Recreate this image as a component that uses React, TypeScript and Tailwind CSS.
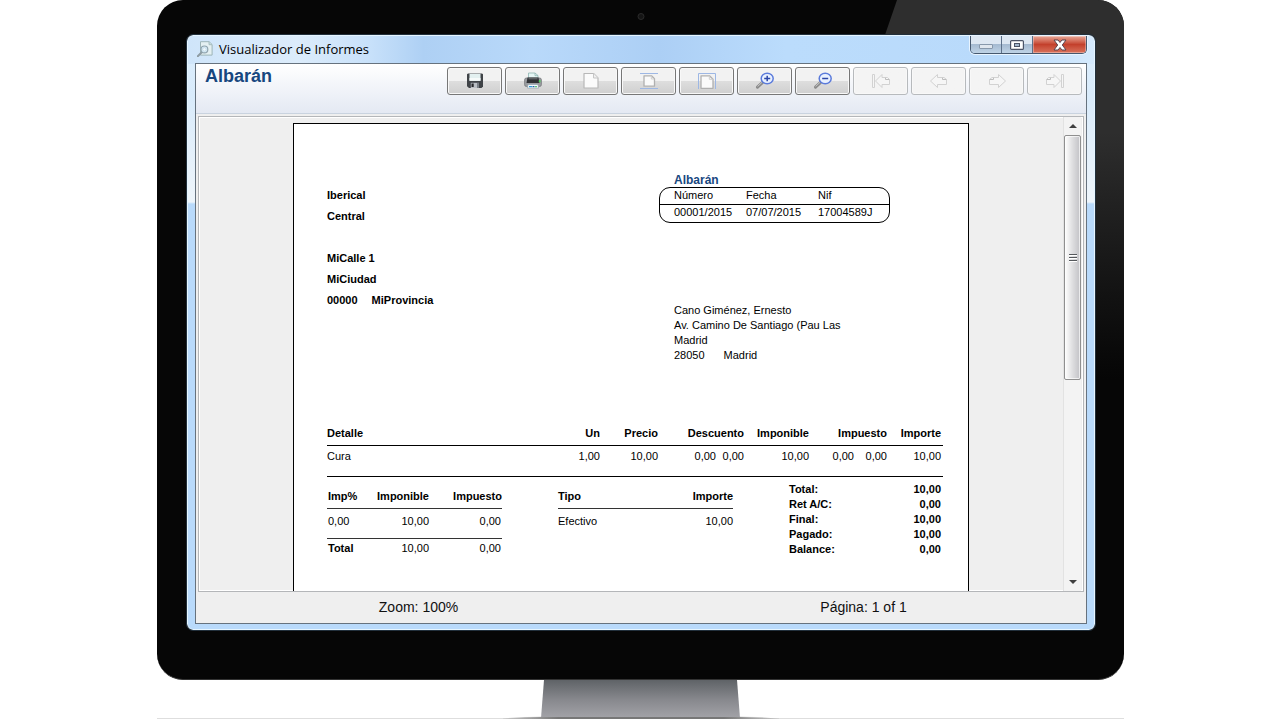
import type { ReactNode } from "react";

function SearchPageIcon() {
  return (
    <svg viewBox="0 0 16 16" className="size-4 shrink-0" aria-hidden="true">
      <path d="M3.5.7h8.6l3 2.8v10.6H3.5z" fill="#e4f0f2" stroke="#9db4b8" />
      <path d="M12 .7v3h3" fill="#c5dcdc" stroke="#9db4b8" strokeWidth=".8" />
      <path d="M.8 15.2 5 11" stroke="#8e9ca3" strokeWidth="2" strokeLinecap="round" />
      <circle cx="7.4" cy="8.4" r="3.4" fill="#d9eefa" stroke="#8fa3ad" strokeWidth="1.2" />
      <circle cx="7.4" cy="8.4" r="1.8" fill="#eef8fd" stroke="#b5cfdb" strokeWidth=".6" />
    </svg>
  );
}

function SaveIcon() {
  return (
    <svg viewBox="0 0 16 16" className="size-4" aria-hidden="true">
      <path d="M0 1.2 1 .5h14l1 .7v12.3L14.5 15H2L0 13.200z" fill="#3f4347" />
      <path d="M2.500.8h11v7h-11z" fill="#e3f0f0" />
      <path d="M2.500 5h11v2.800h-11z" fill="#f6fafa" />
      <path d="M3.800 9.800h8.200V15H3.800z" fill="#b9bec4" />
      <path d="M4.500 10.500h2.200V14H4.500z" fill="#27292c" />
      <path d="M10 10h2v5h-2z" fill="#787e85" />
    </svg>
  );
}

function PrintIcon() {
  return (
    <svg viewBox="0 0 18 18" className="size-[18px]" aria-hidden="true">
      <path d="M4.500 7V1h6.500l3 2.500V7z" fill="#e6f5f4" stroke="#8fb5b3" strokeWidth=".8" />
      <path d="M11 1v2.700h3" fill="none" stroke="#8fb5b3" strokeWidth=".8" />
      <rect x=".6" y="6" width="16.800" height="8.500" rx="1.800" fill="#9a9da1" stroke="#777a7e" strokeWidth=".8" />
      <path d="M3.500 5.500h11l1 5.500h-13z" fill="#303236" />
      <path d="M4.500 6.800h9" stroke="#85898d" strokeWidth=".8" />
      <rect x="14.800" y="8.200" width="1.700" height="2" fill="#4ed35c" />
      <path d="M4 12.500h10l.6 3.600H3.400z" fill="#f4fbff" stroke="#8d9da8" strokeWidth=".6" />
      <path d="M5 14h3v1.200H5z" fill="#2f9bd8" />
      <path d="M8.500 14h2v1.200h-2z" fill="#2766a3" />
      <path d="M11 14h2v1.200h-2z" fill="#61c877" />
    </svg>
  );
}

function ActualSizeIcon() {
  return (
    <svg viewBox="0 0 18 18" className="size-[18px]" aria-hidden="true">
      <path d="M2 1.500h9.500l4.500 4.500V16H2z" fill="#fbfbfb" stroke="#b8b8b8" strokeWidth="1.200" strokeLinejoin="round" />
      <path d="M11.500 1.500V6H16" fill="#f0f0f0" stroke="#c6c6c6" strokeLinejoin="round" />
    </svg>
  );
}

function FitPageIcon() {
  return (
    <svg viewBox="0 0 20 18" className="h-[18px] w-5" aria-hidden="true">
      <path d="M1 1.500h18M1 16.500h18" stroke="#9db7e4" />
      <path
        d="M5 3.800h7.500l3 3V14.200H5z"
        fill="#fafafa"
        stroke="#b0b0b0"
        strokeWidth="1.300"
        strokeLinejoin="round"
      />
      <path d="M12.300 4v3h3" fill="none" stroke="#cfcfcf" />
    </svg>
  );
}

function FitWidthIcon() {
  return (
    <svg viewBox="0 0 20 18" className="h-[18px] w-5" aria-hidden="true">
      <path d="M1.500 17V1.500h17V17" fill="none" stroke="#9db7e4" />
      <path
        d="M4 3.800h8.500l3.500 3.500v9H4z"
        fill="#fafafa"
        stroke="#b0b0b0"
        strokeWidth="1.300"
        strokeLinejoin="round"
      />
      <path d="M12.300 4v3.300h3.500" fill="none" stroke="#cfcfcf" />
    </svg>
  );
}

function ZoomIcon({ plus = false }: { plus?: boolean }) {
  return (
    <svg viewBox="0 0 20 18" className="h-[18px] w-5" aria-hidden="true">
      <path d="M2.500 15.200 7.600 10.300" stroke="#8a8a8a" strokeWidth="3" strokeLinecap="round" />
      <path d="M2.600 14.500 7 10.300" stroke="#c9c9c9" />
      <ellipse cx="12.200" cy="6.500" rx="6" ry="5.300" fill="#e9f1ff" stroke="#5b7bdb" strokeWidth="1.500" />
      <path d={plus ? "M9.200 6.500h6M12.200 3.700v5.600" : "M9.200 6.500h6"} stroke="#2b46a8" strokeWidth="1.500" />
    </svg>
  );
}

function ArrowIcon({ flip = false, bar = false }: { flip?: boolean; bar?: boolean }) {
  return (
    <svg viewBox="0 0 20 16" className="h-4 w-5" aria-hidden="true">
      <g
        transform={flip ? "translate(20 0) scale(-1 1)" : undefined}
        fill="#f6f6f6"
        stroke="#d2d2d2"
        strokeLinejoin="round"
      >
        {bar && <path d="M1.500 1.500h2v13h-2z" />}
        <path
          d={
            bar
              ? "M4.500 8 11 1.500V4.500h5.500l2 2v5H11v3z"
              : "M1.500 8 8.500 1.500v3h6.500l2.500 2v5h-9v3z"
          }
        />
        <path d={bar ? "M14.500 4.800v1.700h3.800" : "M13.500 4.800v1.700h3.800"} fill="none" stroke="#bdbdbd" />
      </g>
    </svg>
  );
}

interface Tool {
  label: string;
  icon: ReactNode;
  disabled?: boolean;
}

const tools: Tool[] = [
  { label: "Guardar", icon: <SaveIcon /> },
  { label: "Imprimir", icon: <PrintIcon /> },
  { label: "Tamaño real", icon: <ActualSizeIcon /> },
  { label: "Ajustar página", icon: <FitPageIcon /> },
  { label: "Ajustar ancho", icon: <FitWidthIcon /> },
  { label: "Acercar", icon: <ZoomIcon plus /> },
  { label: "Alejar", icon: <ZoomIcon /> },
  { label: "Primera página", icon: <ArrowIcon bar />, disabled: true },
  { label: "Página anterior", icon: <ArrowIcon />, disabled: true },
  { label: "Página siguiente", icon: <ArrowIcon flip />, disabled: true },
  { label: "Última página", icon: <ArrowIcon flip bar />, disabled: true },
];

function Toolbar() {
  return (
    <div role="toolbar" aria-label="Informe" className="flex gap-[3px] pt-[3px]">
      {tools.map((tool) => (
        <button
          key={tool.label}
          type="button"
          aria-label={tool.label}
          disabled={tool.disabled}
          className="flex h-7 w-[55px] items-center justify-center rounded-[3px] border border-[#777] bg-linear-to-b from-[#f2f2f2] from-50% via-[#dedede] via-50% to-[#cfcfcf] shadow-[inset_0_0_0_1px_#f8f8f8] disabled:border-[#b7babd] disabled:from-[#f4f4f4] disabled:via-[#f4f4f4] disabled:to-[#f4f4f4]"
        >
          {tool.icon}
        </button>
      ))}
    </div>
  );
}

function TitleBar() {
  return (
    <header className="flex h-[27px] items-start justify-between">
      <div className="flex items-center gap-1.5 pt-[3px] pl-0.5">
        <SearchPageIcon />
        <span className="font-['Open_Sans','Noto_Sans',sans-serif] text-[13px] leading-5 text-black">
          Visualizador de Informes
        </span>
      </div>
      <div className="flex h-[18px] overflow-hidden rounded-b-[5px] border border-t-0 border-[#46586e] shadow-[0_0_0_1px_#e8f4ff]">
        <button
          type="button"
          aria-label="Minimizar"
          className="flex w-[31px] items-end justify-center border-r border-[#5d7089] bg-linear-to-b from-[#dde7f2] from-45% via-[#a3b8cf] via-45% to-[#bfd3e6] pb-1"
        >
          <svg viewBox="0 0 14 5" className="h-[5px] w-3.5" aria-hidden="true">
            <rect x=".5" y=".5" width="13" height="4" rx=".5" fill="#dfe6ee" stroke="#8798ab" />
          </svg>
        </button>
        <button
          type="button"
          aria-label="Maximizar"
          className="flex w-[31px] items-center justify-center border-r border-[#5d7089] bg-linear-to-b from-[#dde7f2] from-45% via-[#a3b8cf] via-45% to-[#bfd3e6]"
        >
          <svg viewBox="0 0 14 10" className="h-2.5 w-3.5" aria-hidden="true">
            <rect x=".6" y=".6" width="12.800" height="8.800" rx="1" fill="#fff" stroke="#4c5568" strokeWidth="1.200" />
            <rect x="4.500" y="3.500" width="5" height="3" fill="#a3b8cf" stroke="#4c5568" />
          </svg>
        </button>
        <button
          type="button"
          aria-label="Cerrar"
          className="flex w-[53px] items-center justify-center bg-linear-to-b from-[#e8a798] from-0% via-[#c3402c] via-50% to-[#d9725c] shadow-[inset_0_0_0_1px_#ffffff55]"
        >
          <svg viewBox="0 0 14 12" className="h-3 w-3.5" aria-hidden="true">
            <path
              d="M1 1h4l2 2.500L9 1h4L9.300 6 13 11H9L7 8.500 5 11H1l3.700-5z"
              fill="#fff"
              stroke="#59444f"
              strokeLinejoin="round"
            />
          </svg>
        </button>
      </div>
    </header>
  );
}

function Scrollbar() {
  return (
    <div className="flex w-[18px] shrink-0 flex-col border-l border-[#e2e2e2] bg-[#f3f3f3]">
      <button type="button" aria-label="Subir" className="flex h-[18px] items-center justify-center">
        <svg viewBox="0 0 8 4" className="h-1 w-2" aria-hidden="true">
          <path d="M0 4 4 0l4 4z" fill="#404040" />
        </svg>
      </button>
      <div className="min-h-0 flex-1">
        <div className="flex h-[56%] items-center justify-center rounded-[2px] border border-[#8f8f8f] bg-linear-to-r from-[#f8f8f8] from-10% via-[#dedee0] via-50% to-[#c2c2c6] shadow-[inset_0_0_0_1px_#ffffffaa]">
          <svg viewBox="0 0 8 9" className="h-[9px] w-2" aria-hidden="true">
            <path d="M0 1.500h8M0 4.500h8M0 7.500h8" stroke="#55585c" />
            <path d="M0 2.500h8M0 5.500h8M0 8.500h8" stroke="#fff" />
          </svg>
        </div>
      </div>
      <button type="button" aria-label="Bajar" className="flex h-[18px] items-center justify-center">
        <svg viewBox="0 0 8 4" className="h-1 w-2" aria-hidden="true">
          <path d="M0 0h8L4 4z" fill="#404040" />
        </svg>
      </button>
    </div>
  );
}

const totals = [
  ["Total:", "10,00"],
  ["Ret A/C:", "0,00"],
  ["Final:", "10,00"],
  ["Pagado:", "10,00"],
  ["Balance:", "0,00"],
];

function DetailTable() {
  return (
    <table className="w-full table-fixed text-right whitespace-nowrap">
      <colgroup>
        <col />
        <col className="w-[60px]" />
        <col className="w-[58px]" />
        <col className="w-[58px]" />
        <col className="w-[28px]" />
        <col className="w-[65px]" />
        <col className="w-[45px]" />
        <col className="w-[33px]" />
        <col className="w-[56px]" />
      </colgroup>
      <thead>
        <tr className="h-[23px] border-b border-black">
          <th className="text-left">Detalle</th>
          <th>Un</th>
          <th>Precio</th>
          <th colSpan={2}>Descuento</th>
          <th>Imponible</th>
          <th colSpan={2}>Impuesto</th>
          <th className="pr-0.5">Importe</th>
        </tr>
      </thead>
      <tbody>
        <tr className="h-[31px] border-b border-black align-top">
          <td className="pt-[3px] text-left">Cura</td>
          <td className="pt-[3px]">1,00</td>
          <td className="pt-[3px]">10,00</td>
          <td className="pt-[3px]">0,00</td>
          <td className="pt-[3px]">0,00</td>
          <td className="pt-[3px]">10,00</td>
          <td className="pt-[3px]">0,00</td>
          <td className="pt-[3px]">0,00</td>
          <td className="pt-[3px] pr-0.5">10,00</td>
        </tr>
      </tbody>
    </table>
  );
}

function Report() {
  return (
    <article className="mx-auto w-[676px] max-w-full shrink-0 border border-black bg-white pt-[49px] pr-[25px] pb-20 pl-[33px] text-[11px] leading-[15px] text-black">
      <div className="flex justify-between">
        <address className="pt-3 leading-[21px] font-bold not-italic">
          <p>Iberical</p>
          <p>Central</p>
          <p>&nbsp;</p>
          <p>MiCalle 1</p>
          <p>MiCiudad</p>
          <p className="flex gap-3.5">
            <span>00000</span>
            <span>MiProvincia</span>
          </p>
        </address>
        <section className="mr-[53px] w-[231px]">
          <h2 className="pl-[15px] text-[12px] leading-[14px] font-bold text-[#17477f]">Albarán</h2>
          <div className="overflow-hidden rounded-[11px] border border-black">
            <table className="w-full table-fixed text-left">
              <colgroup>
                <col className="w-[86px]" />
                <col className="w-[72px]" />
                <col />
              </colgroup>
              <thead>
                <tr className="h-4 border-b border-black align-top leading-[14px]">
                  <th className="pl-3.5 font-normal">Número</th>
                  <th className="font-normal">Fecha</th>
                  <th className="font-normal">Nif</th>
                </tr>
              </thead>
              <tbody>
                <tr className="h-[18px] align-top leading-[14px]">
                  <td className="pl-3.5">00001/2015</td>
                  <td>07/07/2015</td>
                  <td>17004589J</td>
                </tr>
              </tbody>
            </table>
          </div>
          <address className="mt-20 pl-[15px] whitespace-nowrap not-italic">
            <p>Cano Giménez, Ernesto</p>
            <p>Av. Camino De Santiago (Pau Las</p>
            <p>Madrid</p>
            <p className="flex gap-[19px]">
              <span>28050</span>
              <span>Madrid</span>
            </p>
          </address>
        </section>
      </div>

      <div className="mt-[59px]">
        <DetailTable />
      </div>

      <div className="flex justify-between">
        <table className="mt-[9px] w-[175px] table-fixed self-start text-right">
          <thead>
            <tr className="h-[23px] border-b border-[#333]">
              <th className="w-[40px] pl-px text-left">Imp%</th>
              <th className="w-[62px]">Imponible</th>
              <th>Impuesto</th>
            </tr>
          </thead>
          <tbody>
            <tr className="h-[30px] border-b border-[#333] align-top">
              <td className="pt-[5px] pl-px text-left">0,00</td>
              <td className="pt-[5px]">10,00</td>
              <td className="pt-[5px] pr-px">0,00</td>
            </tr>
          </tbody>
          <tfoot>
            <tr className="h-5">
              <th className="pl-px text-left">Total</th>
              <td>10,00</td>
              <td className="pr-px">0,00</td>
            </tr>
          </tfoot>
        </table>
        <table className="mt-[9px] w-[175px] self-start text-right">
          <thead>
            <tr className="h-[23px] border-b border-[#333]">
              <th className="text-left">Tipo</th>
              <th>Importe</th>
            </tr>
          </thead>
          <tbody>
            <tr className="h-[30px] align-top">
              <td className="pt-[5px] text-left">Efectivo</td>
              <td className="pt-[5px]">10,00</td>
            </tr>
          </tbody>
        </table>
        <dl className="mt-[5px] mr-0.5 w-[152px] font-bold">
          {totals.map(([label, value]) => (
            <div key={label} className="flex justify-between">
              <dt>{label}</dt>
              <dd>{value}</dd>
            </div>
          ))}
        </dl>
      </div>
    </article>
  );
}

function ViewerWindow() {
  return (
    <section className="relative flex min-h-0 flex-1 flex-col rounded-[6px] border border-[#e6f5ff] bg-[linear-gradient(180deg,#dceefd_0,#d9ebfb_60px,#eef5fb_166px,#b9dafb_168px,#b9dafb_100%)] px-[7px] pb-[5px] outline outline-[#22303c]">
      <div className="absolute inset-x-0 top-0 h-7 rounded-t-[5px] bg-[linear-gradient(90deg,#cfe5fa_0,#dcecfb_12%,#c8e1fa_20%,#aed0f4_26%,#b9d9fa_38%,#accff5_52%,#bbdcfc_66%,#b9dafb_90%,#d5eafd_100%)]" />
      <div className="relative flex min-h-0 flex-1 flex-col">
        <TitleBar />
        <div className="flex min-h-0 flex-1 flex-col border border-[#66727e] bg-[#efefef]">
          <div className="flex h-[50px] shrink-0 justify-between border-b border-[#c9d3df] bg-linear-to-b from-white to-[#e4e9f3] pr-1 pl-[9px]">
            <h1 className="text-[18px] leading-6 font-bold text-[#17477f]">Albarán</h1>
            <Toolbar />
          </div>
          <div className="mx-0.5 mt-0.5 flex min-h-0 flex-1 border border-[#b4b6b9] pr-0.5 shadow-[inset_0_0_0_1px_#fff]">
            <div className="flex min-w-0 flex-1 flex-col overflow-hidden pt-1.5">
              <Report />
            </div>
            <Scrollbar />
          </div>
          <footer className="grid h-[31px] shrink-0 grid-cols-2 text-center text-[14px] leading-[30px] text-[#111]">
            <p>Zoom: 100%</p>
            <p>Página: 1 of 1</p>
          </footer>
        </div>
      </div>
    </section>
  );
}

function Stand() {
  return (
    <svg viewBox="0 0 280 39" className="mx-auto block h-[39px] w-[280px]" aria-hidden="true">
      <defs>
        <linearGradient id="stand" x1="0" y1="0" x2="0" y2="1">
          <stop offset="0" stopColor="#5f6367" />
          <stop offset=".5" stopColor="#86878c" />
          <stop offset="1" stopColor="#a3a3a8" />
        </linearGradient>
        <linearGradient id="base" x1="0" y1="0" x2="1" y2="0">
          <stop offset="0" stopColor="#c8c8c8" />
          <stop offset=".2" stopColor="#777" />
          <stop offset=".8" stopColor="#777" />
          <stop offset="1" stopColor="#c8c8c8" />
        </linearGradient>
        <radialGradient id="shade" cx=".5" cy="1" r=".5">
          <stop offset=".7" stopColor="#b5b5b5" />
          <stop offset="1" stopColor="#fff" stopOpacity="0" />
        </radialGradient>
      </defs>
      <path d="M14 37.500Q35 35 41 31h198q6 4 27 6.500z" fill="url(#shade)" />
      <path d="M43 0h193l3 38H40z" fill="url(#stand)" />
      <path d="M2 38.500q18-1.500 40-1.500h196q22 0 40 1.500v.5H2z" fill="url(#base)" />
    </svg>
  );
}

export default function App() {
  return (
    <main className="flex h-screen flex-col bg-white pr-[156px] pl-[157px] font-['Liberation_Sans',Arial,sans-serif]">
      <div className="relative flex min-h-0 flex-1 flex-col overflow-hidden rounded-[26px] border-b border-[#333] bg-[#060606] pt-[35px] pr-[29px] pb-[49px] pl-[30px]">
        <div className="absolute top-0 right-0 h-[380px] w-[239px] bg-linear-to-b from-[#2e2e2e] from-35% to-[#060606] [clip-path:polygon(12px_0,100%_0,100%_100%,210px_100%,0_35px)]" />
        <div className="absolute top-[13px] left-1/2 size-[7px] -translate-x-1/2 rounded-full border border-[#2b2b2b] bg-[#151515]" />
        <ViewerWindow />
      </div>
      <div className="border-b border-[#dedede]">
        <div className="-mb-px">
          <Stand />
        </div>
      </div>
    </main>
  );
}
